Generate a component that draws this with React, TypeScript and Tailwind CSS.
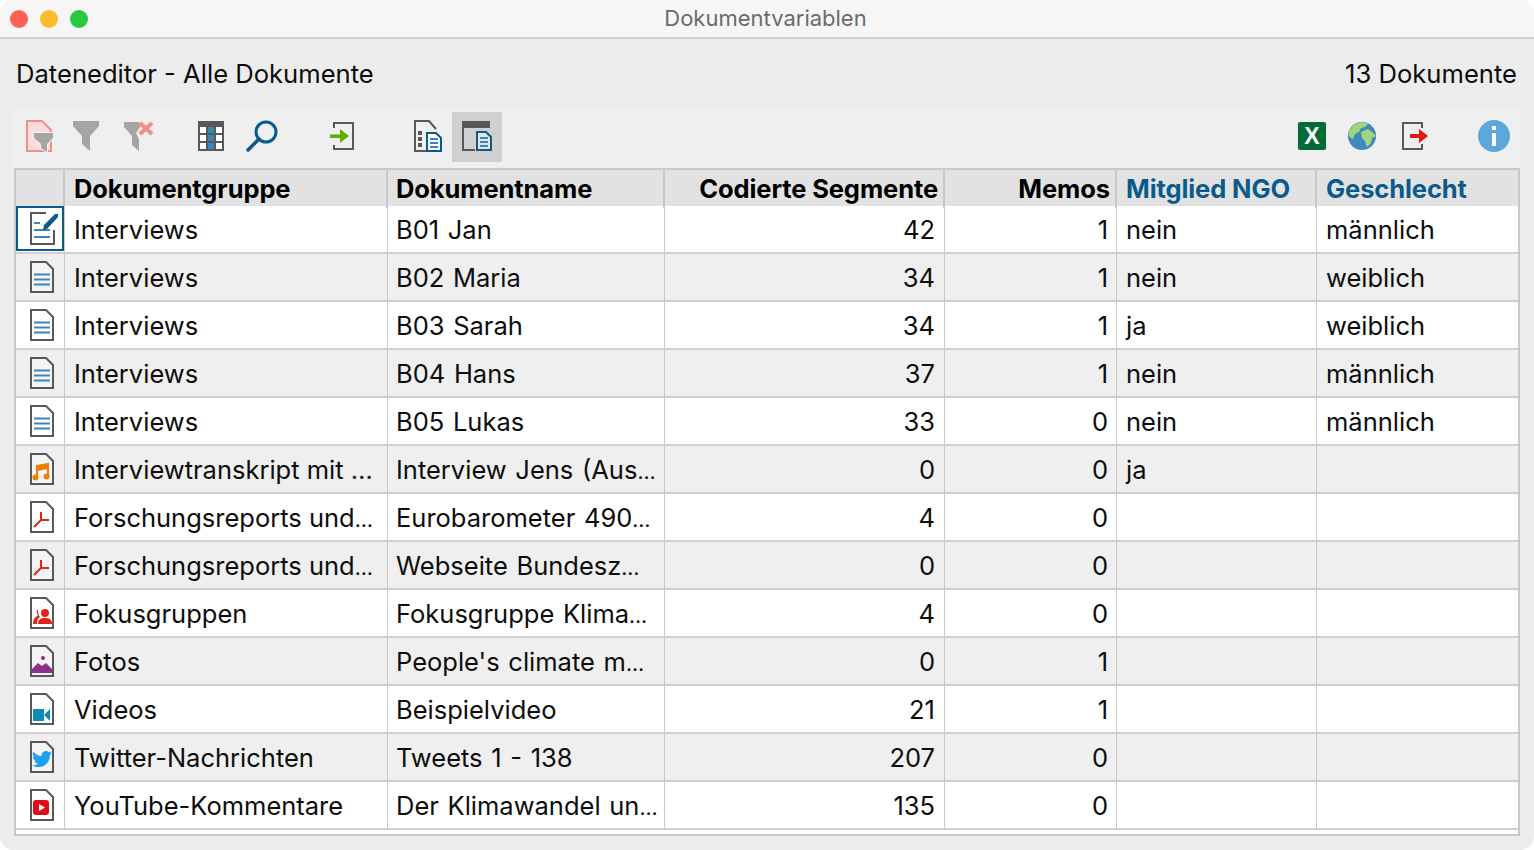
import React from 'react';
import { FaTwitter } from 'react-icons/fa';

const gridCols = 'grid grid-cols-[49px_323px_277px_280px_172px_200px_199px]';

// shared outline of the small document icons
const Doc = ({ children }: { children?: React.ReactNode }) => (
  <svg width="26" height="34" viewBox="0 0 26 34" className="block">
    <path d="M2 2H17L24 9V32H2Z" fill="#fff" fillOpacity="0.35" stroke="#58585a" strokeWidth="2" />
    {children}
  </svg>
);

const TextDoc = () => (
  <Doc>
    <path d="M5 14.5H21M5 19.5H21M5 24.5H21" stroke="#3c85b5" strokeWidth="2" />
  </Doc>
);

const EditDoc = () => (
  <svg width="30" height="34" viewBox="0 0 30 34" className="block">
    <path d="M17 2H2V33H25V19" fill="none" stroke="#58585a" strokeWidth="2" />
    <path d="M5 12H11M5 19H21M5 26H21" stroke="#3c85b5" strokeWidth="2" />
    <path d="M14 19L15 14L26 3H29V6L18 18Z" fill="#0a5a8a" />
  </svg>
);

const AudioDoc = () => (
  <Doc>
    <path d="M8 14V25M19 12V23M8 14L19 12V16L8 18Z" stroke="#f07d00" strokeWidth="2" fill="#f07d00" />
    <circle cx="6.5" cy="25.5" r="3" fill="#f07d00" />
    <circle cx="17.5" cy="24.5" r="3" fill="#f07d00" />
  </Doc>
);

const PdfDoc = () => (
  <Doc>
    <path d="M12 12V20L5 27M12 20H20" fill="none" stroke="#e2231a" strokeWidth="2" />
  </Doc>
);

const GroupDoc = () => (
  <Doc>
    <circle cx="16" cy="17" r="4" fill="#e2231a" />
    <path d="M9 28C9 23 12 22 16 22C20 22 23 23 23 28Z" fill="#e2231a" />
    <path d="M9 13C7 15 8 18 9 19L7 21C5 22 4 25 4 28H8C8 24 9 22 11 21C9 19 9 16 9 13Z" fill="#e2231a" />
  </Doc>
);

const PhotoDoc = () => (
  <Doc>
    <circle cx="14" cy="14" r="2" fill="#8e2f8e" />
    <path d="M3 29V25L9 19L13 22L17 19L23 25V29Z" fill="#8e2f8e" />
  </Doc>
);

const VideoDoc = () => (
  <Doc>
    <rect x="4" y="17" width="11" height="12" fill="#0e8bb0" />
    <path d="M15 23L21 17V29Z" fill="#0e8bb0" />
  </Doc>
);

const TwitterDoc = () => (
  <Doc>
    <FaTwitter x={3} y={9} size={20} color="#1da1f2" />
  </Doc>
);

const YoutubeDoc = () => (
  <Doc>
    <rect x="4" y="12" width="16" height="15" rx="3" fill="#e20a16" />
    <path d="M10 16L16 19.5L10 23Z" fill="#fff" />
  </Doc>
);

const rows = [
  { icon: <EditDoc />, group: 'Interviews', name: 'B01 Jan', codes: '42', memos: '1', ngo: 'nein', gender: 'männlich' },
  { icon: <TextDoc />, group: 'Interviews', name: 'B02 Maria', codes: '34', memos: '1', ngo: 'nein', gender: 'weiblich' },
  { icon: <TextDoc />, group: 'Interviews', name: 'B03 Sarah', codes: '34', memos: '1', ngo: 'ja', gender: 'weiblich' },
  { icon: <TextDoc />, group: 'Interviews', name: 'B04 Hans', codes: '37', memos: '1', ngo: 'nein', gender: 'männlich' },
  { icon: <TextDoc />, group: 'Interviews', name: 'B05 Lukas', codes: '33', memos: '0', ngo: 'nein', gender: 'männlich' },
  { icon: <AudioDoc />, group: 'Interviewtranskript mit …', name: 'Interview Jens (Aus…', codes: '0', memos: '0', ngo: 'ja', gender: '' },
  { icon: <PdfDoc />, group: 'Forschungsreports und…', name: 'Eurobarometer 490…', codes: '4', memos: '0', ngo: '', gender: '' },
  { icon: <PdfDoc />, group: 'Forschungsreports und…', name: 'Webseite Bundesz…', codes: '0', memos: '0', ngo: '', gender: '' },
  { icon: <GroupDoc />, group: 'Fokusgruppen', name: 'Fokusgruppe Klima…', codes: '4', memos: '0', ngo: '', gender: '' },
  { icon: <PhotoDoc />, group: 'Fotos', name: "People's climate m…", codes: '0', memos: '1', ngo: '', gender: '' },
  { icon: <VideoDoc />, group: 'Videos', name: 'Beispielvideo', codes: '21', memos: '1', ngo: '', gender: '' },
  { icon: <TwitterDoc />, group: 'Twitter-Nachrichten', name: 'Tweets 1 - 138', codes: '207', memos: '0', ngo: '', gender: '' },
  { icon: <YoutubeDoc />, group: 'YouTube-Kommentare', name: 'Der Klimawandel un…', codes: '135', memos: '0', ngo: '', gender: '' },
];

// the dots of a cut-off cell are tighter in the app than in Inter
const Cell = ({ text }: { text: string }) =>
  /\S…$/.test(text) ? (
    <>
      {text.slice(0, -1)}
      <span className="text-[21px]">…</span>
    </>
  ) : (
    <>{text}</>
  );

const Toolbar = () => (
  <div className="h-[60px] bg-[#efefef] flex items-center pb-[2px]">
    <div className="w-[50px] h-[50px] pb-[2px] flex items-center justify-center">
      <svg width="28" height="34" viewBox="0 0 28 34">
        <path d="M2 2H17L26 11V32H2Z" fill="#fbdcdb" stroke="#ef8f8a" strokeWidth="2" />
        <path d="M9 14H28V19L22 25V33L16 29V25L9 19Z" fill="#a5a5a5" stroke="#f4f4f4" strokeWidth="2" paintOrder="stroke" />
      </svg>
    </div>
    <div className="w-[50px] h-[50px] pb-[2px] ml-[-3px] flex items-center justify-center">
      <svg width="26" height="32" viewBox="0 0 26 32">
        <path d="M0 1H26V6L17 16V31L9 24V16L0 6Z" fill="#a5a5a5" />
      </svg>
    </div>
    <div className="w-[50px] h-[50px] pb-[2px] ml-[3px] flex items-center justify-center">
      <svg width="32" height="32" viewBox="0 0 32 32">
        <path d="M1 2H16L18 6L13 13L16 19V31L9 25V16L1 7Z" fill="#a5a5a5" />
        <path d="M17 3L29 14M29 3L17 14" stroke="#ef8f8a" strokeWidth="4" />
      </svg>
    </div>
    <div className="w-[50px] h-[50px] pb-[2px] ml-[22px] flex items-center justify-center">
      <svg width="26" height="30" viewBox="0 0 26 30">
        <rect width="26" height="30" fill="#58585a" />
        <rect x="2" y="6" width="6" height="6" fill="#fff" />
        <rect x="10" y="6" width="6" height="6" fill="#3c85b5" />
        <rect x="18" y="6" width="6" height="6" fill="#fff" />
        <rect x="2" y="14" width="6" height="6" fill="#fff" />
        <rect x="10" y="14" width="6" height="6" fill="#3c85b5" />
        <rect x="18" y="14" width="6" height="6" fill="#fff" />
        <rect x="2" y="22" width="6" height="6" fill="#fff" />
        <rect x="10" y="22" width="6" height="6" fill="#3c85b5" />
        <rect x="18" y="22" width="6" height="6" fill="#fff" />
      </svg>
    </div>
    <div className="w-[50px] h-[50px] pb-[2px] ml-[1px] flex items-center justify-center">
      <svg width="32" height="32" viewBox="0 0 32 32">
        <circle cx="20" cy="12" r="10" fill="none" stroke="#0a5a8a" strokeWidth="3" />
        <path d="M13 19L2 30" stroke="#0a5a8a" strokeWidth="3.5" strokeLinecap="round" />
      </svg>
    </div>
    <div className="w-[50px] h-[50px] pb-[2px] ml-[30px] flex items-center justify-center">
      <svg width="24" height="28" viewBox="0 0 24 28">
        <path d="M4 6V1H23V27H4V23" fill="none" stroke="#58585a" strokeWidth="2" />
        <path d="M0 12.5H10V7L19 14L10 21V16H0Z" fill="#5cb000" />
      </svg>
    </div>
    <div className="w-[50px] h-[50px] pb-[2px] ml-[36px] flex items-center justify-center">
      <svg width="28" height="32" viewBox="0 0 28 32">
        <path d="M12 31H1V1H15L22 9" fill="none" stroke="#58585a" strokeWidth="2" />
        <path d="M4 11H8V15H4ZM4 17H8V21H4ZM4 23H8V27H4Z" fill="#58585a" />
        <path d="M13 13H22L27 18V31H13Z" fill="#fff" stroke="#0a5a8a" strokeWidth="2" />
        <path d="M16 19H24M16 23H24M16 27H24" stroke="#3c85b5" strokeWidth="2" />
      </svg>
    </div>
    <div className="w-[50px] h-[50px] pb-[2px] ml-[-1px] bg-[#d0d0d0] flex items-center justify-center">
      <svg width="30" height="30" viewBox="0 0 30 30">
        <rect x="0" y="0" width="28" height="7" fill="#58585a" />
        <path d="M1 7V29H13" fill="none" stroke="#58585a" strokeWidth="2" />
        <path d="M15 11H24L29 16V29H15Z" fill="#e4e4e4" stroke="#0a5a8a" strokeWidth="2" />
        <path d="M18 17H26M18 21H26M18 25H26" stroke="#3c85b5" strokeWidth="2" />
      </svg>
    </div>
    <div className="flex-1" />
    <div className="mb-[2px] w-[28px] h-[28px] rounded-[2px] bg-[#036c36] flex items-center justify-center text-white font-bold text-[23px] leading-none font-['Liberation_Sans',sans-serif]">
      X
    </div>
    <div className="mb-[2px] ml-[22px]">
      <svg width="28" height="28" viewBox="0 0 28 28" className="block">
        <circle cx="14" cy="14" r="14" fill="#4189bd" />
        <path d="M8 2C11 0 17 0 20 2L17 5L13 6L11 10L7 12L5 17C3 16 1 15 0.5 12C1 8 4 4 8 2Z" fill="#a2d67a" />
        <path d="M13 10L20 7L25 11L28 14L24 16L23 21L19 25L17 19L14 16Z" fill="#a2d67a" />
      </svg>
    </div>
    <div className="mb-[2px] ml-[26px]">
      <svg width="26" height="28" viewBox="0 0 26 28" className="block">
        <path d="M20 6V1H1V27H20V22" fill="none" stroke="#58585a" strokeWidth="2" />
        <path d="M8 12H17V7L26 14L17 21V16H8Z" fill="#e2170f" />
      </svg>
    </div>
    <div className="mb-[2px] ml-[50px] mr-[10px]">
      <svg width="32" height="32" viewBox="0 0 32 32" className="block">
        <circle cx="16" cy="16" r="16" fill="#5ca8d9" />
        <rect x="14" y="6" width="4" height="4" fill="#fff" />
        <rect x="14" y="13" width="4" height="13" fill="#fff" />
      </svg>
    </div>
  </div>
);

const Header = () => (
  <div className={`${gridCols} h-[36px] bg-[#e2e2e2] font-bold text-[25.5px] leading-[38px] tracking-[-0.1px]`}>
    <div className="border-r-2 border-[#c8c8c8]" />
    <div className="pl-[9px] border-r-2 border-[#c8c8c8] text-black">Dokumentgruppe</div>
    <div className="pl-[8px] border-r-2 border-[#c8c8c8] text-black">Dokumentname</div>
    <div className="pr-[5px] border-r-2 border-[#c8c8c8] text-black text-right">Codierte Segmente</div>
    <div className="pr-[5px] border-r-2 border-[#c8c8c8] text-black text-right">Memos</div>
    <div className="pl-[9px] border-r-2 border-[#c8c8c8] text-[#0a5a8a]">Mitglied NGO</div>
    <div className="pl-[9px] text-[#0a5a8a]">Geschlecht</div>
  </div>
);

export default function App() {
  return (
    <div className="w-[1534px] h-[850px] bg-white overflow-hidden font-['Inter','Liberation_Sans',sans-serif]">
      <div className="h-full rounded-[14px] bg-[#ececec] flex flex-col overflow-hidden">
        {/* title bar */}
        <div className="h-[39px] shrink-0 bg-[#f6f6f6] border-b-2 border-[#d2d2d2] flex items-center relative">
          <div className="flex gap-[12px] pl-[10px]">
            <div className="w-[18px] h-[18px] rounded-full bg-[#fe5f57]" />
            <div className="w-[18px] h-[18px] rounded-full bg-[#febb2e]" />
            <div className="w-[18px] h-[18px] rounded-full bg-[#28c840]" />
          </div>
          <div className="absolute left-[-3px] right-0 top-0 text-center text-[#6b6b6b] text-[22px] leading-[36px]">Dokumentvariablen</div>
        </div>

        <div className="flex justify-between items-center h-[69px] shrink-0 pt-[2px] pl-[16px] pr-[17px] text-[25.6px] text-[#0d0d0d]">
          <span>Dateneditor - Alle Dokumente</span>
          <span>13 Dokumente</span>
        </div>

        <div className="mx-[14px] w-[1506px]">
          <Toolbar />
          {/* table */}
          <div className="h-[668px] border-2 border-[#c8c8c8] bg-white text-[25.5px] text-[#0d0d0d]">
            <Header />
            {rows.map((r, i) => (
              <div key={i} className={`${gridCols} h-[48px] border-b-2 border-[#cfcfcf] leading-[48px] ${i % 2 === 1 ? 'bg-[#efefef]' : 'bg-white'}`}>
                <div className="border-r border-[#c8c8c8] flex items-start">
                  {i === 0 ? (
                    <div className="w-full h-[45px] border-2 border-[#0a5a8a] pl-[11px] pt-[3px]">{r.icon}</div>
                  ) : (
                    <div className="pl-[13px] pt-[6px]">{r.icon}</div>
                  )}
                </div>
                <div className="pl-[9px] border-r border-[#c8c8c8] whitespace-nowrap overflow-hidden"><Cell text={r.group} /></div>
                <div className="pl-[8px] border-r border-[#c8c8c8] whitespace-nowrap overflow-hidden [word-spacing:1.5px]"><Cell text={r.name} /></div>
                <div className="pr-[9px] border-r border-[#c8c8c8] text-right">{r.codes}</div>
                <div className="pr-[8px] border-r border-[#c8c8c8] text-right">{r.memos}</div>
                <div className="pl-[9px] border-r border-[#c8c8c8]">{r.ngo}</div>
                <div className="pl-[9px]">{r.gender}</div>
              </div>
            ))}
          </div>
        </div>
      </div>
    </div>
  );
}
